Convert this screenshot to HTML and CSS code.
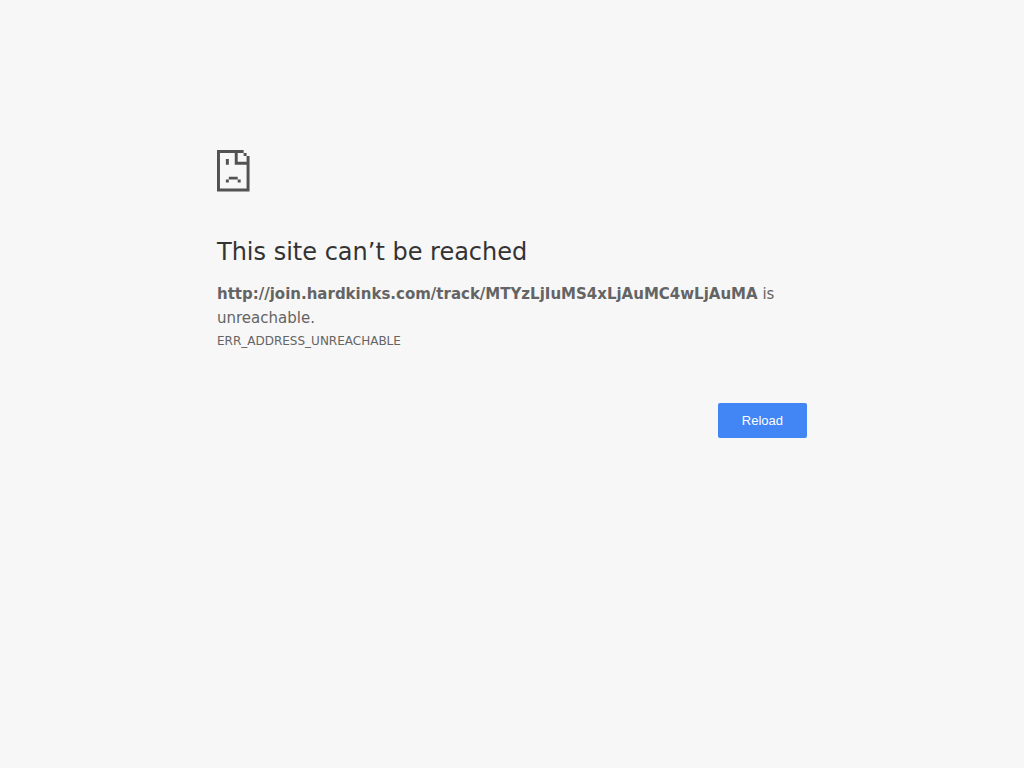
FILE: index.html
```html
<!DOCTYPE html>
<html lang="en">
<head>
    <meta charset="UTF-8">
    <meta name="viewport" content="width=device-width, initial-scale=1">
    <title>This site can’t be reached</title>
    <link rel="stylesheet" href="styles.css">
</head>
<body>
    <main class="interstitial">
        <svg class="icon" viewBox="0 0 72 72" aria-hidden="true">
            <!-- page outline with folded corner -->
            <path d="M0 0h27v3h-6v9h9V6h3v36H0zM3 3v36h27V15H18V3z" fill-rule="evenodd"/>
            <!-- corner pixel, eye, mouth -->
            <path d="M27 3h3v3h-3zM9 9h3v6H9zM12 27h9v3h-9zM9 30h3v3H9zM21 30h3v3h-3z"/>
        </svg>
        <h1>This site can’t be reached</h1>
        <p><strong>http://join.hardkinks.com/track/MTYzLjIuMS4xLjAuMC4wLjAuMA</strong> is unreachable.</p>
        <div class="error-code">ERR_ADDRESS_UNREACHABLE</div>
        <div class="buttons">
            <button type="button" class="reload" onclick="location.reload()">Reload</button>
        </div>
    </main>
</body>
</html>
```
FILE: styles.css
```css
body{
    margin: 0;
    background-color: #f7f7f7;
    color: #646464;
    font-family: "DejaVu Sans", sans-serif;
    font-size: 15px;
    line-height: 24px;
}

.interstitial{
    box-sizing: border-box;
    max-width: 600px;
    margin: 0 auto;
    padding: 150px 5px 0;
}

.icon{
    display: block;
    width: 71px;
    height: 71px;
    margin-bottom: 16px;
    fill: #525252;
}

h1{
    margin: 0 0 15px;
    color: #333;
    font-size: 24px;
    font-weight: 500;
    line-height: 30px;
}

p{
    margin: 0;
    overflow-wrap: break-word;
}

.error-code{
    font-size: 12px;
    line-height: 22px;
}

.buttons{
    display: flex;
    justify-content: flex-end;
    margin-top: 51px;
}

.reload{
    padding: 10px 24px;
    border: 0;
    border-radius: 2px;
    background-color: #4285f4;
    color: #fff;
    font-family: "Liberation Sans", Arial, sans-serif;
    font-size: 13px;
    line-height: 15px;
    cursor: pointer;
}

.reload:hover{
    background-color: #3367d6;
}
```
